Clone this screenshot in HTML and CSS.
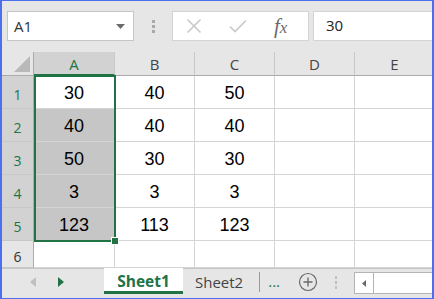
FILE: index.html
```html
<!DOCTYPE html>
<html>
<head>
<meta charset="utf-8">
<link rel="stylesheet" href="styles.css">
</head>
<body>
<div class="frame">
  <div class="formula-bar">
    <div class="name-box">
      <span class="name-text">A1</span>
      <svg class="dd" width="9" height="5" viewBox="0 0 9 5"><path d="M0 0H9L4.5 5Z" fill="#6b6b6b"/></svg>
    </div>
    <div class="grip"><i></i><i></i><i></i></div>
    <div class="fx-buttons">
      <svg class="btn-x" width="16" height="16" viewBox="0 0 16 16"><path d="M1.5 1.5L14.5 14.5M14.5 1.5L1.5 14.5" stroke="#c8c8c8" stroke-width="1.6" fill="none"/></svg>
      <svg class="btn-ok" width="18" height="14" viewBox="0 0 18 14"><path d="M1 7.5L6 12.5L17 1.5" stroke="#c8c8c8" stroke-width="1.6" fill="none"/></svg>
      <span class="fx"><i>f</i><i class="x">x</i></span>
    </div>
    <div class="formula-input">30</div>
  </div>
  <div class="sheet">
    <div class="corner"><svg width="16" height="16" viewBox="0 0 16 16"><path d="M16 0V16H0Z" fill="#b9b9b9"/></svg></div>
    <div class="ch sel">A</div>
    <div class="ch">B</div>
    <div class="ch">C</div>
    <div class="ch">D</div>
    <div class="ch last">E</div>

    <div class="rh sel">1</div>
    <div class="c a1">30</div><div class="c">40</div><div class="c">50</div><div class="c"></div><div class="c last"></div>
    <div class="rh sel">2</div>
    <div class="c g">40</div><div class="c">40</div><div class="c">40</div><div class="c"></div><div class="c last"></div>
    <div class="rh sel">3</div>
    <div class="c g">50</div><div class="c">30</div><div class="c">30</div><div class="c"></div><div class="c last"></div>
    <div class="rh sel">4</div>
    <div class="c g">3</div><div class="c">3</div><div class="c">3</div><div class="c"></div><div class="c last"></div>
    <div class="rh sel">5</div>
    <div class="c g">123</div><div class="c">113</div><div class="c">123</div><div class="c"></div><div class="c last"></div>
    <div class="rh">6</div>
    <div class="c"></div><div class="c"></div><div class="c"></div><div class="c"></div><div class="c last"></div>
    <div class="selection"><span class="handle"></span></div>
  </div>
  <div class="tabbar">
    <div class="nav">
      <svg width="6" height="10" viewBox="0 0 6 10"><path d="M6 0V10L0 5Z" fill="#c0c0c0"/></svg>
      <svg width="6" height="10" viewBox="0 0 6 10"><path d="M0 0V10L6 5Z" fill="#217346"/></svg>
    </div>
    <div class="tab active">Sheet1</div>
    <div class="tab">Sheet2</div>
    <div class="tsep"></div>
    <div class="more">...</div>
    <svg class="add" width="20" height="20" viewBox="0 0 20 20"><circle cx="10" cy="10" r="8.5" stroke="#6b6b6b" stroke-width="1.2" fill="none"/><path d="M10 5.5V14.5M5.5 10H14.5" stroke="#6b6b6b" stroke-width="1.4"/></svg>
    <div class="grip small"><i></i><i></i><i></i></div>
    <div class="hscroll">
      <div class="sbtn"><svg width="4" height="7" viewBox="0 0 4 7"><path d="M4 0V7L0 3.5Z" fill="#6b6b6b"/></svg></div>
      <div class="thumb"></div>
    </div>
  </div>
</div>
</body>
</html>
```
FILE: styles.css
```css
html, body { margin: 0; padding: 0; }
body { width: 434px; height: 299px; overflow: hidden; font-family: "Open Sans", "Noto Sans", sans-serif; }
.frame {
  width: 434px; height: 299px; box-sizing: border-box;
  border: 2px solid #4c6ef0; border-top-width: 1px; border-bottom-width: 1px;
  background: #e6e6e6; display: flex; flex-direction: column; overflow: hidden;
}
.formula-bar { height: 51px; flex: none; display: flex; align-items: flex-start; padding: 10px 0 0 5px; box-sizing: border-box; }
.name-box {
  width: 127px; height: 30px; box-sizing: border-box; background: #fff; border: 1px solid #c6c6c6;
  display: flex; align-items: center; justify-content: space-between; padding: 0 8px 0 6px;
}
.name-text { font-size: 15px; color: #333; }
.dd { margin-top: 1px; }
.grip { width: 38px; height: 30px; display: flex; flex-direction: column; align-items: center; justify-content: center; gap: 2px; }
.grip i { display: block; width: 3px; height: 3px; background: #a9a9a9; }
.fx-buttons {
  width: 137px; height: 30px; box-sizing: border-box; background: #fff; border: 1px solid #d4d4d4;
  display: flex; align-items: center; padding-left: 13px;
}
.btn-x { margin-right: 27px; }
.btn-ok { margin-right: 27px; }
.fx { font-family: "Liberation Serif", serif; font-style: italic; font-size: 21px; color: #6b6b6b; line-height: 1; }
.fx i { font-style: italic; }
.fx .x { font-size: 17px; }
.formula-input {
  margin-left: 4px; flex: 1; height: 30px; box-sizing: border-box; background: #fff; border: 1px solid #d4d4d4; border-right: none;
  font-size: 15px; color: #222; padding: 3px 0 0 12px;
}
.sheet {
  flex: none; position: relative; display: grid;
  grid-template-columns: 32px 81px 80px 80px 80px 79px;
  grid-template-rows: 24px 33px 33px 33px 33px 33px 27px;
  background: #fff;
}
.corner { background: #e6e6e6; border-right: 1px solid #ababab; border-bottom: 1px solid #ababab; position: relative; display: flex; align-items: flex-end; justify-content: flex-end; padding: 0 3px 3px 0; box-sizing: border-box; }
.ch {
  background: #e6e6e6; border-right: 1px solid #c8c8c8; border-bottom: 1px solid #ababab; box-sizing: border-box;
  font-size: 15px; color: #444; display: flex; align-items: center; justify-content: center; padding-top: 1px;
}
.ch.sel { background: #d2d2d2; color: #217346; border-bottom: 2px solid #217346; }
.ch.last { border-right: none; }
.rh {
  background: #e6e6e6; border-right: 1px solid #ababab; border-bottom: 1px solid #c8c8c8; box-sizing: border-box;
  font-size: 14px; color: #333; display: flex; align-items: center; justify-content: center; padding-top: 5px;
}
.rh.sel { background: #d2d2d2; color: #217346; }
.c {
  border-right: 1px solid #d4d4d4; border-bottom: 1px solid #d4d4d4; box-sizing: border-box;
  font-family: "Liberation Sans", Arial, sans-serif; font-size: 18px; color: #000;
  display: flex; align-items: center; justify-content: center; padding-top: 3px;
}
.c.last { border-right: none; }
.c.g { background: #c6c6c6; }
.selection {
  position: absolute; left: 32px; top: 23px; width: 82px; height: 167px; box-sizing: border-box;
  border: 2px solid #217346; pointer-events: none;
}
.handle { position: absolute; right: -5px; bottom: -5px; width: 6px; height: 6px; background: #217346; border: 1px solid #fff; }
.tabbar { flex: 1; display: flex; align-items: flex-start; background: #e6e6e6; border-top: 1px solid #c6c6c6; box-sizing: border-box; }
.nav { width: 102px; height: 26px; display: flex; align-items: center; gap: 22px; padding-left: 28px; box-sizing: border-box; }
.tab { height: 25px; box-sizing: border-box; padding: 0 12px; font-size: 15px; color: #444; display: flex; align-items: center; }
.tab.active { background: #fff; color: #217346; font-weight: bold; font-size: 15.5px; border-bottom: 3px solid #217346; width: 79px; justify-content: center; margin-top: -1px; height: 26px; padding: 2px 0 0; }
.tsep { width: 1px; height: 20px; background: #9a9a9a; margin: 3px 8px 0 4px; }
.more { font-size: 15px; color: #217346; height: 24px; display: flex; align-items: center; }
.add { margin: 3px 0 0 18px; }
.grip.small { width: 36px; height: 26px; }
.grip.small i { width: 2px; height: 3px; background: #c0c0c0; }
.hscroll { flex: 1; height: 20px; margin-top: 3px; background: #fff; border: 1px solid #b4b4b4; border-right: none; display: flex; }
.sbtn { width: 18px; display: flex; align-items: center; justify-content: center; border-right: 1px solid #b4b4b4; }
```
